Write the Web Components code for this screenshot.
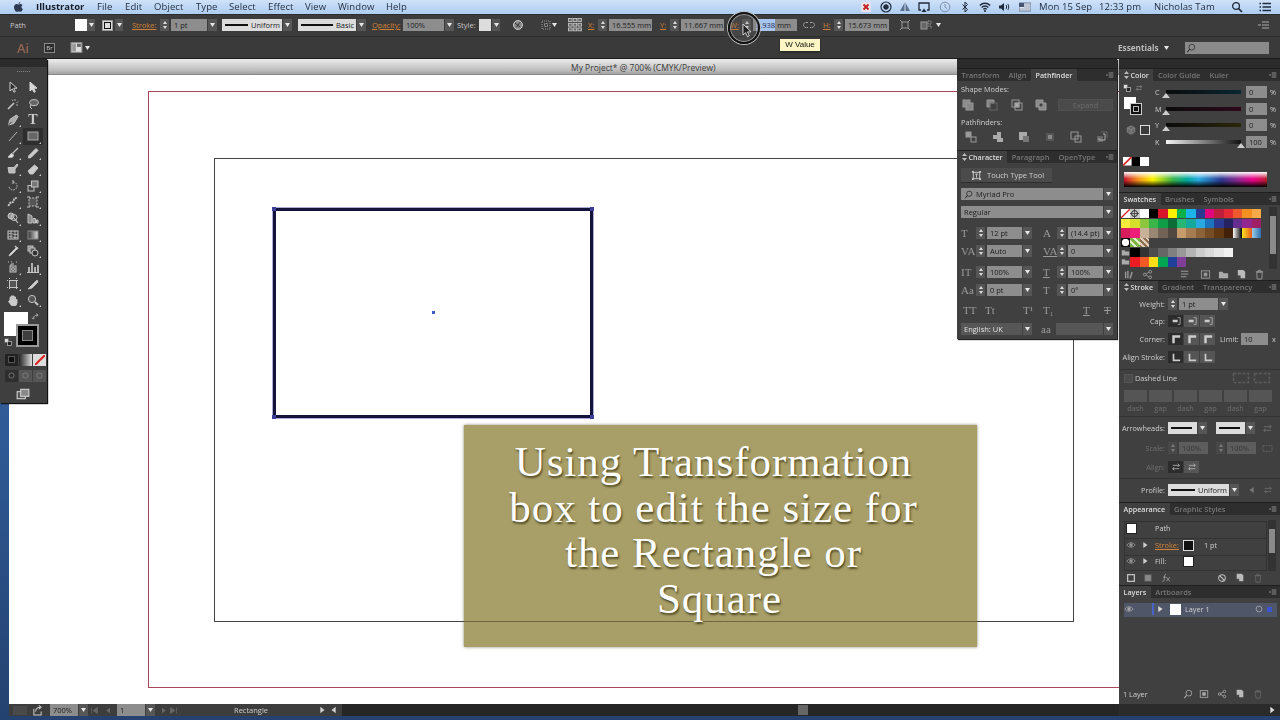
<!DOCTYPE html>
<html lang="en">
<head>
<meta charset="utf-8">
<title>Illustrator</title>
<style>
  html, body { margin: 0; padding: 0; }
  body {
    width: 1280px; height: 720px; overflow: hidden;
    display: flex; flex-direction: column;
    background: linear-gradient(180deg, #3d6aa8 0%, #2f5a96 60%, #24426f 100%);
    font-family: "Open Sans", "Liberation Sans", sans-serif;
  }
  ai-workspace { flex: none; }
</style>
</head>
<body>
<ai-menubar></ai-menubar>
<ai-controlbar></ai-controlbar>
<ai-appbar></ai-appbar>
<ai-workspace>
  <ai-doc slot="doc">
    <ai-caption>Using Transformation<br>box to edit the size for<br>the Rectangle or<br><span style="margin-left:12px">Square</span></ai-caption>
  </ai-doc>
  <ai-dock slot="dock"></ai-dock>
  <ai-tools slot="float"></ai-tools>
  <ai-floatpanel slot="float"></ai-floatpanel>
</ai-workspace>
<ai-statusbar></ai-statusbar>

<script>
//Icons, all on a 12x12 box
const ICONS = {
  sel: '<path d="M3 1v9l2.3-2 1.7 3.3 1.3-.7L6.7 7.2H10z" fill="#2c2c2c" stroke="#ccc"/>',
  dsel: '<path d="M3 1v9l2.3-2 1.7 3.3 1.3-.7L6.7 7.2H10z" fill="#d8d8d8" stroke="#d8d8d8"/>',
  wand: '<path d="M1 11l6-6" stroke-width="1.6"/><path d="M8 1v2M11 3.500L9.500 5M11 7H9M5 1.500l1 1.500" stroke-width=".8"/>',
  lasso: '<ellipse cx="7" cy="4.600" rx="4.300" ry="3" fill="#666"/><path d="M4 7L3 9l2 2"/>',
  pen: '<path d="M9.500 1L11 2.600 6.800 9.500 1.500 11 3 5.400z" fill="#aaa" stroke="#ccc"/><path d="M1.500 11l3-3" stroke="#333"/>',
  line: '<path d="M2 11L10 2" stroke-width=".9"/>',
  rect: '<rect x="1" y="2" width="10" height="8" fill="#666" stroke="#aaa"/>',
  brush: '<path d="M11 1L5.500 6.500" stroke-width="1.200"/><path d="M5 6.500c-2 0-2 2.500-4 3.500 2 1 5.500 1 5.500-2z" fill="#ddd"/>',
  pencil: '<path d="M9 1.500l2 2L4 10.500 1.500 11l.5-2.500z" fill="#ccc" stroke="#ccc"/>',
  blob: '<path d="M1 4.500h6L10 1l1 1-3 4v4H2z" fill="#bbb"/>',
  eraser: '<path d="M7.500 2L11 5l-5 6H3L1 8z" fill="#ccc"/>',
  rotate: '<path d="M6 2a4 4 0 1 1-4 4" stroke-dasharray="1.600 1"/><path d="M6 0v4" />',
  scale: '<rect x="1" y="5.500" width="6" height="5.500" fill="#444"/><rect x="4.500" y="1" width="6.500" height="6" fill="#777"/>',
  warp: '<path d="M1.500 10c2-6 4-2 5-5s2-3 4-3" stroke-width="2" stroke-dasharray="2 .6"/>',
  free: '<rect x="2" y="2" width="8" height="8" stroke-dasharray="2 1.200" fill="#555"/><path d="M0 1h3M9 1h3M0 11h3M9 11h3" />',
  shape: '<circle cx="4" cy="4" r="3" fill="#999"/><circle cx="7" cy="5.500" r="3"/><path d="M7 6l4 5" stroke-width="1.200"/>',
  persp: '<path d="M1 11V2l4 2v7zM6 11V6.500h2.500V11zM9.500 11V8H11v3z" fill="#888"/>',
  mesh: '<rect x="1" y="2" width="10" height="8" fill="#444"/><path d="M1 5c3-2 6 2 10 0M1 8c3-2 6 2 10 0M4 2v8M8 2v8" stroke-width=".8"/>',
  grad: '<defs><linearGradient id="g"><stop offset="0" stop-color="#333"/><stop offset="1" stop-color="#ddd"/></linearGradient></defs><rect x="1" y="2" width="10" height="8" fill="url(#g)" stroke="#888"/>',
  drop: '<path d="M10 2L3 9l-1 2 2-1 7-7z" fill="#ddd"/><path d="M8 1l3 3" stroke-width="1.400"/>',
  blend: '<rect x="1" y="1" width="5" height="5" fill="#888"/><rect x="3" y="3" width="5" height="5" fill="#555"/><circle cx="8" cy="8" r="3" fill="#333"/>',
  spray: '<rect x="3" y="5" width="6" height="6" fill="#555"/><circle cx="6" cy="8" r="1.500"/><path d="M4 5V3h3M1 1h1M4 1h1M9 1h1"/>',
  column: '<path d="M2 11V6M5 11V2M8 11V6M11 11V4" stroke-width="1.700"/><path d="M0 11.500h12"/>',
  board: '<rect x="2.500" y="2.500" width="7" height="7" fill="#555"/><path d="M2.500 0v12M9.500 0v12M0 2.500h12M0 9.500h12" stroke-dasharray="1 1"/>',
  slice: '<path d="M1 11L10 2l1 2-6 6z" fill="#ccc"/>',
  hand: '<path d="M3 7V3.500h1V6V2h1.500v4V2H7v4V3h1.500v4.500V5.500H10V9l-1 2.500H4.500L1.500 7.500 2.500 6.500z" fill="#ccc"/>',
  zoom: '<circle cx="5" cy="5" r="3.600" fill="#555"/><path d="M8 8l3 3" stroke-width="2"/>',
  menu: '<path d="M4 3h7M4 6h7M4 9h7" /><path d="M0 6h3"/>',
  eye: '<path d="M1 6c2.500-3.500 7.500-3.500 10 0-2.500 3.500-7.500 3.500-10 0z"/><circle cx="6" cy="6" r="1.500" fill="currentColor"/>',
  tri: '<path d="M4 2.500l5 3.500-5 3.500z" fill="currentColor" stroke="none"/>',
  triL: '<path d="M8 2.500L3 6l5 3.500z" fill="currentColor" stroke="none"/>',
  globe: '<circle cx="6" cy="6" r="4.500" fill="#888"/><path d="M3 4l5 4M8 3.500L4.500 8" stroke="#333"/>',
  selbox: '<rect x="2" y="2" width="8" height="8" stroke-dasharray="1 1"/><rect x="4.500" y="4.500" width="3" height="3" stroke-dasharray="1 .5"/>',
  refpt: '<g fill="#666" stroke="#ccc" stroke-width=".7"><rect x=".5" y=".5" width="3" height="2.500"/><rect x="4.500" y=".5" width="3" height="2.500"/><rect x="8.500" y=".5" width="3" height="2.500"/><rect x=".5" y="4.500" width="3" height="2.500"/><rect x="4.500" y="4.500" width="3" height="2.500"/><rect x="8.500" y="4.500" width="3" height="2.500"/><rect x=".5" y="8.500" width="3" height="2.500"/><rect x="4.500" y="8.500" width="3" height="2.500"/><rect x="8.500" y="8.500" width="3" height="2.500"/></g>',
  link: '<path d="M5 3.500H3a2.500 2.500 0 0 0 0 5h2M7 3.500h2a2.500 2.500 0 0 1 0 5H7" stroke-dasharray="2 .6"/>',
  isolate: '<rect x="3" y="3" width="6" height="6"/><path d="M1 1l2 2M11 1L9 3M1 11l2-2M11 11L9 9"/>',
  recolor: '<rect x="1" y="3" width="6" height="7" fill="#666"/><path d="M8 2h3v3H8zM8 7h3v3" stroke-dasharray="1 .5"/>',
  arrange: '<rect x="1" y="1.500" width="10" height="9" fill="#ddd" stroke="#888"/><rect x="6.500" y="2.500" width="3.500" height="3" fill="#666" stroke="none"/><rect x="2" y="2.500" width="3.500" height="7" fill="#999" stroke="none"/>',
  union: '<rect x="1" y="1" width="7" height="7" fill="#888"/><rect x="4" y="4" width="7" height="7" fill="#888"/>',
  minus: '<path d="M1 1h7v3H4v4H1z" fill="#888"/><rect x="4" y="4" width="7" height="7" stroke="#666"/>',
  inter: '<rect x="1" y="1" width="7" height="7"/><rect x="4" y="4" width="7" height="7"/><rect x="4" y="4" width="4" height="4" fill="#aaa"/>',
  excl: '<path d="M1 1h7v3H4v4H1zM8 4h3v7H4V8h4z" fill="#888"/>',
  pf1: '<rect x="1" y="1" width="5" height="5" fill="#999"/><rect x="6" y="6" width="5" height="5"/>',
  pf2: '<path d="M1 4h4V1h4v6h2v4H5V8H1z" fill="#aaa" stroke="none"/>',
  pf3: '<rect x="1" y="1" width="8" height="8" fill="#aaa" stroke="none"/><rect x="5" y="5" width="6" height="6" fill="#777" stroke="none"/>',
  pf4: '<rect x="2" y="2" width="8" height="8" fill="#555" stroke="none"/><rect x="4" y="4" width="4" height="4" fill="#888" stroke="none"/>',
  pf5: '<rect x="1" y="1" width="7" height="7"/><rect x="5" y="5" width="6" height="6"/>',
  pf6: '<path d="M5 1h6v6" stroke="#666"/><rect x="1" y="5" width="6" height="6" fill="#666" stroke="none"/><path d="M7 3h2v6H3V7" stroke="#aaa"/>',
  search: '<circle cx="7" cy="5" r="3.500"/><path d="M4.500 7.500L1.500 11" stroke-width="1.300"/>',
  cube: '<path d="M6 1l4.500 2.500v5L6 11 1.500 8.500v-5z" fill="#666"/><path d="M1.500 3.500L6 6l4.500-2.500M6 6v5"/>',
  touch: '<rect x="2.500" y="2.500" width="7" height="7"/><path d="M4.500 4.500h3M6 4.500v4"/><path d="M1 1h2v2H1zM9 1h2v2H9zM1 9h2v2H1zM9 9h2v2H9z" fill="currentColor" stroke="none"/>',
  libs: '<path d="M1 10V3h1.500v7zM3.500 10V2H5v8zM6 10l2-7 1.500.5-2 7z" fill="#999" stroke="none"/>',
  share: '<circle cx="3" cy="6" r="1.500"/><circle cx="9" cy="3" r="1.500"/><circle cx="9" cy="9" r="1.500"/><path d="M4.500 5.500l3-2M4.500 6.500l3 2"/>',
  export: '<path d="M2 4v7h8V7" stroke-width="1.100"/><path d="M4 7c0-3 2-4.500 5-4.500M7.500 0.500L10 2.500 7.500 4.500" stroke-width="1.100"/>',
  listm: '<path d="M1 2.500h8M1 5.500h8M1 8.500h6" stroke-width="1.200"/>',
  place: '<rect x="1.500" y="2" width="9" height="8"/><rect x="4.500" y="4.500" width="3" height="3" fill="currentColor"/>',
  folder: '<path d="M1 3h4l1 1.500h5V10H1z" fill="#aaa" stroke="none"/>',
  newp: '<path d="M2 1h6l2 2v7H2z" fill="#bbb" stroke="none"/><rect x="1" y="7" width="4" height="4" fill="#444" stroke="none"/>',
  trash: '<path d="M2 3h8M4.500 3V1.500h3V3M3 3.500l.5 7.500h5L9 3.500z" />',
  ring: '<circle cx="6" cy="6" r="3.500"/>',
  nope: '<circle cx="6" cy="6" r="4" stroke-width="1.300"/><path d="M3 3l6 6" stroke-width="1.300"/>',
  square: '<rect x="2" y="2" width="8" height="8" stroke-width="1.400"/>',
  filled: '<rect x="2" y="2" width="8" height="8" fill="#888" stroke="#555"/>',
  fx: '<path d="M6 1.500C4 1.500 4.500 4 4 7c-.3 2.500-1 3.500-2.500 3.500M2.500 5H6M6.500 5l4 5M10.500 5l-4 5" stroke-width=".9"/>',
  apple: '<path d="M8.300 1c.1.900-.7 2-1.800 2-.1-1 .8-1.900 1.800-2zM6.600 3.400c.6 0 1.200-.5 2-.5.700 0 1.500.4 2 1.100-1.700 1-1.400 3.300.3 4-.4 1-1.300 2.800-2.400 2.800-.7 0-1-.4-1.800-.4s-1.100.4-1.800.4C3.600 10.800 2 8.200 2 6.200 2 4.300 3.300 3 4.600 3c.8 0 1.400.4 2 .4z" fill="currentColor" stroke="none"/>',
  xbox: '<rect x="1" y="1" width="10" height="10" rx="1.500" fill="#e9e4ea" stroke="none"/><path d="M3.500 3.500l5 5M8.500 3.500l-5 5" stroke="#c32020" stroke-width="1.800"/>',
  rec: '<circle cx="6" cy="6" r="5" stroke-width="1.200"/><circle cx="6" cy="6" r="2.300" fill="currentColor"/>',
  drive: '<path d="M6 1l5 9H1z" fill="#59708e" stroke="none"/><path d="M6 1v9" stroke="#cfe0f4"/>',
  airplay: '<path d="M3 9H1V2h10v7H9" stroke-width="1.300"/><path d="M3.500 11L6 7.500 8.500 11z" fill="currentColor" stroke="none"/>',
  clock: '<circle cx="6" cy="6" r="4.800" stroke-width=".8"/><path d="M6 3v3l2 1.500" stroke-width=".8"/>',
  bt: '<path d="M3.500 3.500l5 5L6 11V1l2.500 2.500-5 5" stroke-width="1"/>',
  wifi: '<path d="M.8 4.500c3-3 7.400-3 10.400 0M2.600 6.500c2-2 4.800-2 6.800 0M4.300 8.400c1-1 2.400-1 3.400 0" stroke-width="1.300"/><circle cx="6" cy="10" r="1" fill="currentColor" stroke="none"/>',
  vol: '<path d="M1 4.500h2L6 2v8L3 7.500H1z" fill="currentColor" stroke="none"/><path d="M8 4c.8 1 .8 3 0 4M9.800 3c1.200 1.700 1.200 4.300 0 6"/>',
  flag: '<rect x="0" y="2" width="12" height="8" fill="#dfe8f4" stroke="#46566e" stroke-width=".7"/><rect x="0" y="2" width="5" height="4" fill="#46566e" stroke="none"/><path d="M5 4h7M5 6h7M0 8h12" stroke="#7b8799" stroke-width=".7"/>',
  mag: '<circle cx="5" cy="5" r="3.400" stroke-width="1.300"/><path d="M7.500 7.500L11 11" stroke-width="1.700"/>',
  list: '<path d="M3.500 2.500H12M3.500 6H12M3.500 9.500H12" stroke-width="1.400"/><path d="M.5 2.500h1.500M.5 6h1.500M.5 9.500h1.500" stroke-width="1.400"/>',
  first: '<path d="M2 2v8M10 2L4 6l6 4z" fill="currentColor"/>',
  prev: '<path d="M8 2L3 6l5 4z" fill="currentColor" stroke="none"/>',
  next: '<path d="M4 2l5 4-5 4z" fill="currentColor" stroke="none"/>',
  last: '<path d="M10 2v8M2 2l6 4-6 4z" fill="currentColor"/>',
  screen: '<rect x="1" y="4" width="7" height="6" fill="#555"/><rect x="4" y="2" width="7" height="6" fill="#888"/>',
  swap: '<path d="M3 9c0-3 2-5 6-5M7 2l2.500 2L7 6M1.500 7.500L3 9.500l2-2" stroke-width=".9"/>',
  dflt: '<rect x="1" y="1" width="6" height="6" fill="#ddd" stroke="#555"/><rect x="5" y="5" width="6" height="6" fill="#222" stroke="#ccc"/>',
  capb: '<path d="M2 6h6" stroke-width="3"/><path d="M8 2h3v8H8" stroke-width=".8"/>',
  cor: '<path d="M3 11V3h8" stroke-width="3"/>',
  als: '<path d="M3 2v8h8" stroke-width="2"/>',
  dash: '<rect x="1" y="3" width="10" height="6" stroke-dasharray="2 1"/>',
  swaps: '<path d="M2 4h8M8 2l2 2-2 2M10 8H2M4 6L2 8l2 2" stroke-width=".8"/>'
};

const ico = (name, size = 12, color = "") =>
  `<svg width="${size}" height="${size}" viewBox="0 0 12 12" fill="none" stroke="currentColor" style="display:block;flex:none;${color ? "color:" + color : ""}">${ICONS[name]}</svg>`;

const CARET = `<svg width="5" height="4" viewBox="0 0 5 4" style="display:block"><path d="M0 0h5L2.500 4z" fill="#e8e8e8"/></svg>`;

//Shared css for the rows that panels are built from
const ROWCSS = `
  .row { display: grid; align-items: start; }
  .cell { height: 12px; display: flex; align-items: center; white-space: nowrap; line-height: 12px; min-width: 0; }
  .r { justify-content: flex-end; padding-right: 3px; }
  .dim { color: #6e6e6e; }
  .org { color: #d5853a; text-decoration: underline; }
`;

//Build rows from reference coordinates: each row is [centreY, [[x, html, cls], ...]]
const place = (ox, oy, rows) => {
  let out = "";
  rows.forEach((row, i) => {
    const y = row[0];
    const nextY = i + 1 < rows.length ? rows[i + 1][0] : y + 12;
    const cols = row[1].map((c, j) => {
      const nx = j + 1 < row[1].length ? row[1][j + 1][0] : null;
      return nx === null ? "auto" : (nx - c[0]) + "px";
    }).join(" ");
    const top = i === 0 ? y - 6 - oy : 0;
    const cells = row[1].map(c => `<div class="cell ${c[2] || ""}">${c[1]}</div>`).join("");
    out += `<div class="row" style="grid-template-columns:${cols};height:${nextY - y}px;margin-top:${top}px;margin-left:${row[1][0][0] - ox}px">${cells}</div>`;
  });
  return out;
};

const gridCols = items => items.map((it, i) => i + 1 < items.length ? (items[i + 1][0] - it[0]) + "px" : "auto").join(" ");

const f = (attrs) => `<ai-field ${attrs}></ai-field>`;

//Number / text field with spinner and dropdown
class AiField extends HTMLElement {
  connectedCallback() {
    const a = n => this.getAttribute(n);
    const has = n => this.hasAttribute(n);
    const w = a("w") || 35;
    const h = a("h") || 12;
    const root = this.attachShadow({ mode: "open" });
    const line = has("line") ? `<i class="ln"></i>` : "";
    root.innerHTML = `
    <style>
      :host { display: inline-flex; height: ${h}px; gap: 1px; font-size: 7.5px; color: #1d1d1d; ${has("dim") ? "opacity:.38;" : ""} }
      .sp { width: 10px; background: #555; display: flex; flex-direction: column; align-items: center; justify-content: space-evenly; border-right: 1px solid #3a3a3a; box-sizing: border-box; }
      .sp b { width: 0; height: 0; border: 2.5px solid transparent; border-top: 0; border-bottom: 3px solid #ddd; }
      .sp b + b { border-bottom: 0; border-top: 3px solid #ddd; }
      .v { width: ${w}px; background: ${has("line") ? "#dcdcdc" : has("dark") ? "#565656" : "#8d8d8d"}; ${has("dark") ? "color:#e2e2e2;" : ""} box-sizing: border-box; padding: 0 2px 0 3px; display: flex; align-items: center; gap: 3px; white-space: nowrap; overflow: hidden; line-height: ${h}px; ${has("line") ? "color:#222;" : ""} }
      .ln { flex: 1; height: 2px; background: #111; }
      .d { width: 9px; background: #565656; display: flex; align-items: center; justify-content: center; }
      mark { background: #a9c6ee; color: #1a2a50; margin-right: -1px; }
    </style>
    ${has("spin") ? `<div class="sp"><b></b><b></b></div>` : ""}
    <div class="v">${has("search") ? ico("search", 9, "#222") : ""}${line}${has("sel") ? `<mark>${a("sel")}</mark>` : ""}<span>${a("value") || ""}</span></div>
    ${has("drop") ? `<div class="d">${CARET}</div>` : ""}`;
  }
}
customElements.define("ai-field", AiField);

//Top system menu bar
class AiMenubar extends HTMLElement {
  connectedCallback() {
    const items = [[12, ico("apple", 12, "#2c3a52")], [36, "<b>Illustrator</b>"], [97, "File"], [125, "Edit"], [154, "Object"], [196, "Type"], [229, "Select"], [268, "Effect"], [305, "View"], [338, "Window"], [386, "Help"],
      [860, ico("xbox")], [880, ico("rec")], [899, ico("drive")], [918, ico("airplay")], [939, ico("clock", 12, "#6d7f97")], [959, ico("bt")], [979, ico("wifi")], [998, ico("vol")], [1019, ico("flag")],
      [1039, "Mon 15 Sep"], [1099, "12:33 pm"], [1154, "Nicholas Tam"], [1231, ico("mag")], [1259, ico("list")]];
    this.attachShadow({ mode: "open" }).innerHTML = `
    <style>
      :host { display: block; height: 14px; background: linear-gradient(180deg, #cfe2f9 0%, #aecdf0 100%); color: #1f2a3c; font-size: 9.5px; filter: blur(.3px); }
      .bar { height: 14px; display: grid; grid-template-columns: ${gridCols(items)}; margin-left: 12px; align-items: center; line-height: 14px; letter-spacing: .1px; }
      .bar > div { white-space: nowrap; display: flex; align-items: center; }
      b { font-weight: 700; color: #151c28; letter-spacing: 0; }
    </style>
    <div class="bar">${items.map(it => `<div>${it[1]}</div>`).join("")}</div>`;
  }
}
customElements.define("ai-menubar", AiMenubar);

//Control bar with the path options
class AiControlbar extends HTMLElement {
  connectedCallback() {
    const dd = `<span class="dd">${CARET}</span>`;
    const items = [[10, `<span class="p">Path</span>`], [75, `<span class="sw"></span>`], [87, dd], [102, `<span class="st"><i></i></span>`], [115, dd],
      [132, `<span class="o">Stroke:</span>`], [160, f('spin drop value="1 pt" w="36"')],
      [222, f('line drop value="Uniform" w="60"')], [298, f('line drop value="Basic" w="58"')],
      [372, `<span class="o">Opacity:</span>`], [403, f('drop value="100%" w="41"')],
      [457, `<span class="p">Style:</span>`], [479, `<span class="sw g"></span>`], [492, dd],
      [512, ico("globe")], [540, ico("selbox", 12, "#999")], [552, CARET], [568, ico("refpt", 14)],
      [588, `<span class="o">X:</span>`], [598, f('spin value="16.555 mm" w="43"')],
      [660, `<span class="o">Y:</span>`], [670, f('spin value="11.667 mm" w="43"')],
      [730, `<span class="o">W:</span>`], [742, f('spin sel="3.938" value="mm" w="44"')],
      [803, ico("link", 12, "#aaa")], [823, `<span class="o">H:</span>`], [834, f('spin value="15.673 mm" w="44"')],
      [899, ico("isolate", 12, "#999")], [920, ico("recolor", 12, "#999")], [936, CARET], [1258, ico("menu", 12, "#aaa")]];
    this.attachShadow({ mode: "open" }).innerHTML = `
    <style>
      :host { display: block; position: relative; height: 23px; background: #3c3c3c; border-top: 1px solid #2a2a2a; box-sizing: border-box; border-bottom: 1px solid #2c2c2c; font-size: 7.5px; color: #ccc; z-index: 5; filter: blur(.3px); }
      .bar { height: 20px; display: grid; grid-template-columns: ${gridCols(items)}; align-items: center; margin-left: 10px; }
      .bar > div { white-space: nowrap; display: flex; align-items: center; }
      .p { color: #c8c8c8; }
      .o { color: #cf8136; text-decoration: underline; }
      .sw { width: 12px; height: 12px; background: #fff; display: block; }
      .sw.g { background: #ddd; }
      .st { width: 11px; height: 11px; background: #ddd; border: 1px solid #999; display: flex; align-items: center; justify-content: center; box-sizing: border-box; }
      .st i { width: 5px; height: 5px; border: 1px solid #111; background: #ddd; display: block; }
      .dd { width: 8px; height: 12px; background: #555; display: flex; align-items: center; justify-content: center; }
      .ring { position: absolute; left: 728px; top: -3px; width: 28px; height: 28px; border-radius: 50%; border: 2px solid #111; box-shadow: 0 0 0 1px #bbb, inset 0 0 0 1px #999; background: rgba(110,110,110,.22); }
      .cur { position: absolute; left: 742px; top: 8px; }
      .tip { position: absolute; left: 780px; top: 24px; width: 40px; height: 12px; background: #fbf6c4; color: #111; font: 8px/12px "Liberation Sans", sans-serif; text-align: center; box-shadow: 0 1px 2px rgba(0,0,0,.5); }
    </style>
    <div class="bar">${items.map(it => `<div>${it[1]}</div>`).join("")}</div>
    <div class="ring"></div>
    <svg class="cur" width="11" height="15" viewBox="0 0 11 15"><path d="M1 1v11l2.600-2.400 1.800 4.200 1.900-.8-1.800-4.100H9z" fill="#222" stroke="#eee" stroke-width=".8"/></svg>
    <div class="tip">W Value</div>`;
  }
}
customElements.define("ai-controlbar", AiControlbar);

//Application bar
class AiAppbar extends HTMLElement {
  connectedCallback() {
    this.attachShadow({ mode: "open" }).innerHTML = `
    <style>
      :host { display: flex; align-items: center; height: 22px; background: #3a3a3a; color: #ccc; font-size: 8px; border-bottom: 1px solid #1b1b1b; box-sizing: border-box; filter: blur(.3px); }
      .ai { margin-left: 17px; width: 27px; font-size: 13px; font-weight: 600; color: #93634f; }
      .br { width: 11px; height: 10px; border: 1px solid #888; box-sizing: border-box; font-size: 6px; line-height: 8px; text-align: center; color: #ccc; background: #2b2b2b; margin-right: 15px; }
      .arr { margin-right: 2px; }
      .sp { flex: 1; }
      .ess { font-weight: 700; color: #bdbdbd; font-size: 8.2px; width: 46px; }
      .cr { width: 21px; }
      .search { width: 84px; height: 12px; background: #8a8a8a; margin-right: 11px; display: flex; align-items: center; padding-left: 1px; box-sizing: border-box; color: #333; }
    </style>
    <div class="ai">Ai</div><div class="br">Br</div>
    <div class="arr">${ico("arrange", 13)}</div>${CARET}
    <div class="sp"></div>
    <div class="ess">Essentials</div><div class="cr">${CARET}</div>
    <div class="search">${ico("search", 10)}</div>`;
  }
}
customElements.define("ai-appbar", AiAppbar);

//Holds document, dock and the floating windows
class AiWorkspace extends HTMLElement {
  constructor() {
    super();
    this.attachShadow({ mode: "open" }).innerHTML = `
    <style>
      :host { display: flex; position: relative; height: 645px; padding-left: 9px; box-sizing: border-box; }
    </style>
    <slot name="doc"></slot><slot name="dock"></slot><slot name="float"></slot>`;
  }
}
customElements.define("ai-workspace", AiWorkspace);

//Document window with the artwork
class AiDoc extends HTMLElement {
  connectedCallback() {
    this.attachShadow({ mode: "open" }).innerHTML = `
    <style>
      :host { display: flex; flex-direction: column; width: 1110px; height: 645px; }
      .title { height: 16px; flex: none; background: linear-gradient(#ececec, #bdbdbd 75%, #a2a2a2); color: #3a3a3a; font-size: 8.5px; line-height: 17px; padding-left: 562px; box-sizing: border-box; border-bottom: 1px solid #8b8b8b; }
      .canvas { flex: 1; position: relative; background: #fff; overflow: hidden; }
      .bleed { position: absolute; left: 139px; top: 16px; width: 1100px; height: 597px; border: 1px solid #a8485a; box-sizing: border-box; }
      .board { position: absolute; left: 205px; top: 83px; width: 860px; height: 464px; border: 1px solid #444; box-sizing: border-box; }
      .rect { position: absolute; left: 264px; top: 133px; width: 320px; height: 210px; box-sizing: border-box; border: 3px solid #14143a; box-shadow: 0 0 0 1px rgba(90,90,170,.5); }
      .h { position: absolute; width: 4px; height: 4px; background: #3e3e98; }
      .dot { position: absolute; left: 423px; top: 236px; width: 3px; height: 3px; background: #3f5cc8; }
    </style>
    <div class="title">My Project* @ 700% (CMYK/Preview)</div>
    <div class="canvas">
      <div class="bleed"></div>
      <div class="board"></div>
      <div class="rect"></div>
      <div class="h" style="left:263px;top:132px"></div><div class="h" style="left:581px;top:132px"></div>
      <div class="h" style="left:263px;top:340px"></div><div class="h" style="left:581px;top:340px"></div>
      <div class="dot"></div>
      <slot></slot>
    </div>`;
  }
}
customElements.define("ai-doc", AiDoc);

//Olive caption of the tutorial, the artboard edge shows through it behind the text
class AiCaption extends HTMLElement {
  connectedCallback() {
    this.attachShadow({ mode: "open" }).innerHTML = `
    <style>
      :host { position: absolute; z-index: 0; left: 455px; top: 350px; width: 513px; height: 222px; box-sizing: border-box; padding: 14px 14px 0 0; background: #a89e67; box-shadow: 0 0 3px rgba(90,85,50,.7); color: #fff; font-family: "Liberation Serif", "Times New Roman", serif; font-size: 43px; line-height: 45.5px; letter-spacing: .95px; text-align: center; text-shadow: 1px 2px 2px rgba(50,45,15,.75); }
      :host::before { content: ""; position: absolute; z-index: -1; left: 0; right: 0; top: 196px; height: 1px; background: #6f683f; }
    </style>
    <slot></slot>`;
  }
}
customElements.define("ai-caption", AiCaption);

//Floating tool panel
class AiTools extends HTMLElement {
  connectedCallback() {
    const names = ["sel", "dsel", "wand", "lasso", "pen", "T", "line", "rect", "brush", "pencil", "blob", "eraser", "rotate", "scale", "warp", "free", "shape", "persp", "mesh", "grad", "drop", "blend", "spray", "column", "board", "slice", "hand", "zoom"];
    const plain = ["sel", "dsel", "wand", "lasso", "drop", "slice", "T"];
    const tools = names.map(n => {
      const tick = plain.indexOf(n) < 0 ? `<i></i>` : "";
      const inner = n === "T" ? `<span class="t">T</span>` : ico(n, 12, "#c4c4c4");
      return `<div class="tool ${n === "rect" ? "on" : ""}">${inner}${tick}</div>`;
    }).join("");
    this.attachShadow({ mode: "open" }).innerHTML = `
    <style>
      :host { position: absolute; left: 0; top: 0; width: 47px; height: 344px; background: #3f3f3f; display: flex; flex-direction: column; box-shadow: 1px 1px 1px #111; z-index: 3; filter: blur(.3px); }
      .hd { height: 8px; background: #2b2b2b; flex: none; }
      .gr { height: 12px; flex: none; }
      .gr::after { content: ""; display: block; width: 13px; margin: 4px auto 0; border-top: 1px dotted #888; }
      .grid { display: grid; grid-template-columns: 20px 20px; grid-auto-rows: 16.4px; padding-left: 3px; flex: none; }
      .tool { position: relative; display: flex; align-items: center; justify-content: center; }
      .tool.on { background: #2d2d2d; }
      .tool i { position: absolute; right: 2px; bottom: 1px; width: 0; height: 0; border-left: 2px solid transparent; border-bottom: 2px solid #ccc; }
      .t { font: 700 14px/14px "Liberation Serif", serif; color: #ccc; }
      .color { position: relative; height: 41px; flex: none; margin-top: 3.5px; }
      .fill { position: absolute; left: 4px; top: 0; width: 24px; height: 24px; background: #fff; }
      .stroke { position: absolute; left: 16px; top: 12px; width: 23px; height: 23px; background: #000; border: 2px solid #999; box-sizing: border-box; display: flex; align-items: center; justify-content: center; }
      .stroke::after { content: ""; width: 9px; height: 9px; border: 1px solid #888; background: #3f3f3f; }
      .sw { position: absolute; left: 31px; top: 0; }
      .df { position: absolute; left: 4px; top: 26px; }
      .modes { display: flex; gap: 1px; margin: 1px 0 0 5px; height: 12px; flex: none; }
      .modes div { width: 13px; background: #555; display: flex; align-items: center; justify-content: center; }
      .scr { margin: 5px 0 0 16px; }
    </style>
    <div class="hd"></div><div class="gr"></div>
    <div class="grid">${tools}</div>
    <div class="color">
      <div class="fill"></div><div class="stroke"></div>
      <div class="sw">${ico("swap", 9, "#ccc")}</div><div class="df">${ico("dflt", 8)}</div>
    </div>
    <div class="modes">
      <div style="background:#222"><span style="width:5px;height:5px;background:#111;border:1px solid #555;display:block"></span></div>
      <div style="background:linear-gradient(90deg,#222,#ddd)"></div>
      <div style="background:#ddd"><svg width="10" height="10" viewBox="0 0 10 10"><path d="M0 10L10 0" stroke="#d22" stroke-width="2"/></svg></div>
    </div>
    <div class="modes" style="margin-top:4px">
      <div style="background:#2e2e2e;color:#888">${ico("ring", 9)}</div><div style="color:#888">${ico("ring", 9)}</div><div style="color:#888">${ico("ring", 9)}</div>
    </div>
    <div class="scr">${ico("screen", 14, "#ccc")}</div>`;
  }
}
customElements.define("ai-tools", AiTools);

//Tabbed panel frame
class AiPanel extends HTMLElement {
  connectedCallback() {
    const tabs = (this.getAttribute("tabs") || "").split("|");
    const act = Number(this.getAttribute("act") || 0);
    const arrows = this.hasAttribute("arrows") ? `<svg width="5" height="8" viewBox="0 0 5 8" style="margin-right:2px"><path d="M0 3l2.500-3L5 3zM0 5l2.500 3L5 5z" fill="#bbb"/></svg>` : "";
    const h = this.getAttribute("h") || 100;
    const tabsHtml = tabs.map((t, i) => `<div class="tab ${i === act ? "on" : ""}">${i === 0 ? arrows : ""}${t}</div>`).join("");
    this.attachShadow({ mode: "open" }).innerHTML = `
    <style>
      :host { display: block; background: #404040; border-top: 1px solid #1f1f1f; box-sizing: border-box; color: #cfcfcf; font-size: 7.3px; }
      .tabs { height: 12px; background: #2e2e2e; display: flex; align-items: stretch; position: relative; font-size: 7.5px; }
      .tab { padding: 0 4.5px; display: flex; align-items: center; font-weight: 600; color: #777; white-space: nowrap; line-height: 12px; }
      .tab.on { background: #404040; color: #ddd; font-size: 7.2px; }
      .m { position: absolute; right: 3px; top: 2px; color: #bbb; }
      .body { height: ${h}px; position: relative; overflow: hidden; }
    </style>
    <div class="tabs">${tabsHtml}<div class="m">${ico("menu", 8)}</div></div>
    <div class="body"><slot></slot></div>`;
  }
}
customElements.define("ai-panel", AiPanel);

//Floating group: Pathfinder and Character
class AiFloatpanel extends HTMLElement {
  connectedCallback() {
    this.attachShadow({ mode: "open" }).innerHTML = `
    <style>
      :host { position: absolute; left: 957px; top: 0; width: 160px; background: #404040; box-shadow: 1px 1px 1px #222; z-index: 3; filter: blur(.3px); }
      .hd { height: 9px; background: #2b2b2b; }
    </style>
    <div class="hd"></div>
    <ai-pathfinder></ai-pathfinder>
    <ai-character></ai-character>`;
  }
}
customElements.define("ai-floatpanel", AiFloatpanel);

class AiPathfinder extends HTMLElement {
  connectedCallback() {
    const i = n => ico(n, 12, "#999");
    this.attachShadow({ mode: "open" }).innerHTML = `
    <style>:host { display: block; } ${ROWCSS}
      .btn { width: 55px; height: 12px; background: #4a4a4a; border: 1px solid #4f4f4f; box-sizing: border-box; color: #6c6c6c; text-align: center; line-height: 10px; }
    </style>
    <ai-panel tabs="Transform|Align|Pathfinder" act="2" h="69">
      ${place(957, 81, [
        [89, [[961, "Shape Modes:"]]],
        [105, [[962, i("union")], [986, i("minus")], [1011, i("inter")], [1035, i("excl")], [1058, `<div class="btn">Expand</div>`]]],
        [122, [[961, "Pathfinders:"]]],
        [137, [[965, i("pf1")], [992, i("pf2")], [1018, i("pf3")], [1044, i("pf4")], [1070, i("pf5")], [1096, i("pf6")]]]
      ])}
    </ai-panel>`;
  }
}
customElements.define("ai-pathfinder", AiPathfinder);

class AiCharacter extends HTMLElement {
  connectedCallback() {
    const g = (t, st = "") => `<span class="g" style="${st}">${t}</span>`;
    const ul = "text-decoration:underline";
    const pair = (y, ic1, v1, ic2, v2) => [y, [[961, ic1], [976, f(`spin drop value="${v1}" w="35"`)], [1043, ic2], [1057, f(`spin drop value="${v2}" w="35"`)]]];
    this.attachShadow({ mode: "open" }).innerHTML = `
    <style>:host { display: block; } ${ROWCSS}
      .tt { width: 91px; height: 15px; background: #4b4b4b; border-bottom: 1px solid #2e2e2e; display: flex; align-items: center; gap: 5px; padding-left: 10px; box-sizing: border-box; color: #cfcfcf; font-size: 7.5px; }
      .g { font: 11px/12px "Liberation Serif", serif; color: #9a9a9a; }
    </style>
    <ai-panel tabs="Character|Paragraph|OpenType" arrows h="176">
      ${place(957, 163, [
        [175.5, [[961, `<div class="tt">${ico("touch", 11, "#ccc")}Touch Type Tool</div>`]]],
        [194, [[961, f('drop search w="142" value="Myriad Pro"')]]],
        [212, [[961, f('drop w="142" value="Regular"')]]],
        pair(233, g("T"), "12 pt", g("A"), "(14.4 pt)"),
        pair(251, g("VA"), "Auto", g("VA", ul), "0"),
        pair(272, g("IT"), "100%", g("T", ul), "100%"),
        pair(290, g("Aa"), "0 pt", g("T"), "0°"),
        [310, [[963, g("TT")], [985, g("Tt")], [1023, g("T¹")], [1043, g("T₁")], [1083, g("T", ul)], [1104, g("T", "text-decoration:line-through")]]],
        [329, [[961, f('drop w="61" dark value="English: UK"')], [1041, g("aa")], [1056, f('drop w="47" dark')]]]
      ])}
    </ai-panel>`;
  }
}
customElements.define("ai-character", AiCharacter);

//Right dock
class AiDock extends HTMLElement {
  connectedCallback() {
    this.attachShadow({ mode: "open" }).innerHTML = `
    <style>
      :host { display: flex; flex-direction: column; width: 161px; height: 645px; flex: none; background: #3c3c3c; filter: blur(.3px); }
      .hd { height: 9px; background: #2b2b2b; flex: none; }
    </style>
    <div class="hd"></div>
    <ai-colorpanel></ai-colorpanel>
    <ai-swatches></ai-swatches>
    <ai-strokepanel></ai-strokepanel>
    <ai-appearance></ai-appearance>
    <ai-layers></ai-layers>`;
  }
}
customElements.define("ai-dock", AiDock);

class AiColorpanel extends HTMLElement {
  connectedCallback() {
    const sl = (bg, end) => `<div class="sl" style="background:${bg}"><svg class="mk" style="left:${end ? 71 : -4}px" width="8" height="5" viewBox="0 0 8 5"><path d="M4 0l4 5H0z" fill="#ccc"/></svg></div>`;
    const row = (y, l, bg, v, end) => [y, [[1155, l], [1166, sl(bg, end)], [1246, f(`w="21" value="${v}"`)], [1270, "%"]]];
    this.attachShadow({ mode: "open" }).innerHTML = `
    <style>:host { display: block; flex: none; } ${ROWCSS}
      .sl { width: 75px; height: 4px; position: relative; }
      .mk { position: absolute; top: 3px; display: block; }
      .fs { position: absolute; left: 5px; top: 16px; width: 12px; height: 12px; background: #fff; }
      .fs2 { position: absolute; left: 11px; top: 22px; width: 12px; height: 12px; background: #111; border: 1px solid #ccc; box-sizing: border-box; display: flex; align-items: center; justify-content: center; }
      .fs2::after { content: ""; width: 4px; height: 4px; border: 1px solid #bbb; }
      .ic { position: absolute; }
      .sq { position: absolute; left: 21px; top: 44px; width: 8px; height: 8px; border: 1px solid #ddd; background: #3a3a3a; }
      .tri { position: absolute; left: 4px; top: 76px; display: flex; }
      .tri div { width: 8.5px; height: 8.5px; }
      .spec { position: absolute; left: 5px; top: 91px; width: 143px; height: 15px;
        background: linear-gradient(#fff, rgba(255,255,255,0) 45%, rgba(0,0,0,0) 55%, #000),
        linear-gradient(90deg, #c6102c 0%, #f7941d 10%, #fff200 20%, #39b54a 34%, #00a99d 44%, #27aae1 52%, #2b3990 68%, #92278f 80%, #ec008c 90%, #be1e2d 100%); }
    </style>
    <ai-panel tabs="Color|Color Guide|Kuler" arrows h="111">
      ${place(1119, 81, [
        row(92, "C", "linear-gradient(90deg,#0b0b0b,#0a2630)", "0"),
        row(109, "M", "linear-gradient(90deg,#0b0b0b,#2c0a1a)", "0"),
        row(125, "Y", "linear-gradient(90deg,#0b0b0b,#2a260a)", "0"),
        row(142, "K", "linear-gradient(90deg,#f4f4f4,#111)", "100", true)
      ])}
      <div class="ic" style="left:4px;top:3px">${ico("dflt", 8)}</div>
      <div class="ic" style="left:16px;top:3px">${ico("swaps", 8, "#aaa")}</div>
      <div class="fs"></div><div class="fs2"></div>
      <div class="ic" style="left:7px;top:44px">${ico("cube", 10, "#888")}</div><div class="sq"></div>
      <div class="tri"><div><svg width="8.5" height="8.5" viewBox="0 0 8 8" style="display:block"><rect width="8" height="8" fill="#fff"/><path d="M0 8L8 0" stroke="#d22" stroke-width="1.5"/></svg></div><div style="background:#000"></div><div style="background:#fff"></div></div>
      <div class="spec"></div>
    </ai-panel>`;
  }
}
customElements.define("ai-colorpanel", AiColorpanel);

class AiSwatches extends HTMLElement {
  connectedCallback() {
    const rows = [
      ["none", "reg", "#fff", "#000", "#d7162a", "#fff200", "#0db14b", "#1cb4e8", "#2a3a90", "#e0067e", "#be1e3c", "#e32a35", "#ee5a2c", "#f29122", "#f7a947"],
      ["#f6ec3c", "#d5de2b", "#8cc63f", "#39b54a", "#0f9d47", "#0e6d36", "#27b673", "#15a89d", "#28a9e0", "#1c75bc", "#2b3990", "#262262", "#652d90", "#91278f", "#9e1f63"],
      ["#d91c5c", "#ec1e79", "#c7b299", "#998675", "#736357", "#534741", "#c69c6d", "#a67c52", "#8c6239", "#754c24", "#603913", "#42210b", "linear-gradient(90deg,#fff,#000)", "linear-gradient(90deg,#f7e11f,#e8581f)", "linear-gradient(90deg,#9ccbe8,#2d6fb0)"],
      ["radial-gradient(circle,#fff 55%,#111 60%)", "repeating-linear-gradient(45deg,#7cb342 0 3px,#dcedc8 3px 5px)", "repeating-linear-gradient(45deg,#8d6e53 0 2px,#e0cdb8 2px 4px)"],
      ["folder", "#000", "#333", "#4d4d4d", "#666", "#808080", "#999", "#b3b3b3", "#ccc", "#d9d9d9", "#e6e6e6", "#f2f2f2"],
      ["folder", "#ed1c24", "#f15a24", "#ffde17", "#00a651", "#21409a", "#7f3f98"]
    ];
    const cell = c => {
      if (c === "none") return `<div style="background:#fff"><svg width="9" height="9" viewBox="0 0 9 9" style="display:block"><path d="M0 9L9 0" stroke="#d22" stroke-width="1.3"/></svg></div>`;
      if (c === "reg") return `<div style="background:#ccc"><svg width="9" height="9" viewBox="0 0 9 9" style="display:block"><circle cx="4.5" cy="4.5" r="3" fill="none" stroke="#222"/><path d="M4.5 0v9M0 4.5h9" stroke="#222" stroke-width=".7"/></svg></div>`;
      if (c === "folder") return `<div>${ico("folder", 9)}</div>`;
      return `<div style="background:${c}"></div>`;
    };
    const footer = [[1124, "libs"], [1142, "share"], [1180, "listm"], [1200, "place"], [1218, "folder"], [1236, "newp"], [1254, "trash"]];
    this.attachShadow({ mode: "open" }).innerHTML = `
    <style>:host { display: block; flex: none; } ${ROWCSS}
      .wrap { display: flex; padding: 4px 0 0 5px; height: 62px; box-sizing: border-box; gap: 5px; }
      .g { width: 140px; display: flex; flex-direction: column; gap: .4px; }
      .r { display: grid; grid-template-columns: repeat(15, 9.33px); grid-auto-rows: 9.3px; }
      .sb { width: 8px; height: 62px; margin-top: -2px; background: #333; position: relative; }
      .sb b { width: 6px; height: 38px; background: #8a8a8a; position: absolute; top: 9px; left: 1px; }
    </style>
    <ai-panel tabs="Swatches|Brushes|Symbols" h="75">
      <div class="wrap">
        <div class="g">${rows.map(r => `<div class="r">${r.map(cell).join("")}</div>`).join("")}</div>
        <div class="sb"><b></b></div>
      </div>
      ${place(1119, 267, [[274, footer.map(it => [it[0], ico(it[1], 11, "#999")])]])}
    </ai-panel>`;
  }
}
customElements.define("ai-swatches", AiSwatches);

class AiStrokepanel extends HTMLElement {
  connectedCallback() {
    const bt = (list) => `<span class="bts">${list.map((n, i) => `<span class="${i ? "" : "on"}">${ico(n, 10, "#ccc")}</span>`).join("")}</span>`;
    const boxes = [0, 1, 2, 3, 4, 5].map(() => `<i></i>`).join("");
    const lab = ["dash", "gap", "dash", "gap", "dash", "gap"].map(t => `<span>${t}</span>`).join("");
    this.attachShadow({ mode: "open" }).innerHTML = `
    <style>:host { display: block; flex: none; } ${ROWCSS}
      .bts { display: inline-flex; gap: 1px; }
      .bts span { width: 15px; height: 12px; background: #555; display: flex; align-items: center; justify-content: center; }
      .bts span.on { background: #2c2c2c; }
      .cb { width: 7px; height: 7px; background: #4b4b4b; border: 1px solid #555; display: block; }
      .bx { display: grid; grid-template-columns: repeat(6, 25px); width: 150px; }
      .bx i { display: block; width: 23px; height: 12px; background: #555; }
      .lb { display: grid; grid-template-columns: repeat(6, 25px); color: #6e6e6e; width: 150px; }
      .lb span { width: 23px; text-align: center; }
      .sep { position: absolute; left: 0; right: 0; height: 1px; background: #333; }
    </style>
    <ai-panel tabs="Stroke|Gradient|Transparency" arrows h="209">
      <div class="sep" style="top:76px"></div><div class="sep" style="top:123px"></div><div class="sep" style="top:185px"></div>
      ${place(1119, 293, [
        [304, [[1119, "Weight:", "r"], [1168, f('spin drop value="1 pt" w="39"')]]],
        [321, [[1119, "Cap:", "r"], [1168, bt(["capb", "capb", "capb"])]]],
        [339, [[1119, "Corner:", "r"], [1168, bt(["cor", "cor", "cor"])], [1220, "Limit:"], [1241, f('value="10" w="27"')], [1272, "x"]]],
        [357, [[1119, "Align Stroke:", "r"], [1168, bt(["als", "als", "als"])]]],
        [378, [[1124, `<span class="cb"></span>`], [1135, "Dashed Line"], [1232, `<span style="display:flex;gap:3px;opacity:.5">${ico("dash", 18, "#777")}${ico("dash", 18, "#777")}</span>`]]],
        [396, [[1124, `<div class="bx">${boxes}</div>`]]],
        [408, [[1124, `<div class="lb">${lab}</div>`]]],
        [428, [[1119, "Arrowheads:", "r"], [1168, f('line drop w="29"')], [1216, f('line drop w="29"')], [1262, ico("swaps", 11, "#777")]]],
        [448, [[1119, "Scale:", "r dim"], [1168, f('spin dim value="100%" w="29"')], [1216, f('spin dim value="100%" w="29"')], [1262, ico("dash", 11, "#666")]]],
        [467, [[1119, "Align:", "r dim"], [1168, bt(["swaps", "swaps"])]]],
        [490, [[1119, "Profile:", "r"], [1168, f('line drop value="Uniform" w="61"')], [1247, ico("triL", 10, "#777")], [1263, ico("swaps", 10, "#777")]]]
      ])}
    </ai-panel>`;
  }
}
customElements.define("ai-strokepanel", AiStrokepanel);

class AiAppearance extends HTMLElement {
  connectedCallback() {
    const i = (n, c = "#999") => ico(n, 10, c);
    this.attachShadow({ mode: "open" }).innerHTML = `
    <style>:host { display: block; flex: none; } ${ROWCSS}
      .list { position: absolute; left: 5px; top: 6px; width: 143px; height: 50px; border: 1px solid #333; box-sizing: border-box; }
      .list i { position: absolute; left: 0; right: 0; height: 1px; background: #333; }
      .sw { width: 11px; height: 11px; background: #fff; border: 1px solid #222; display: block; box-sizing: border-box; }
      .swb { width: 11px; height: 11px; background: #111; border: 1px solid #ddd; display: block; box-sizing: border-box; }
      .sb { position: absolute; left: 149px; top: 5px; width: 8px; height: 51px; background: #333; }
      .sb b { position: absolute; left: 1px; top: 9px; width: 6px; height: 24px; background: #8a8a8a; }
    </style>
    <ai-panel tabs="Appearance|Graphic Styles" h="70">
      <div class="list"><i style="top:16px"></i><i style="top:33px"></i></div>
      <div class="sb"><b></b></div>
      ${place(1119, 515, [
        [528, [[1126, `<span class="sw"></span>`], [1155, "Path"]]],
        [545, [[1126, i("eye")], [1140, i("tri", "#ccc")], [1155, `<span class="org">Stroke:</span>`], [1183, `<span class="swb"></span>`], [1204, "1 pt"]]],
        [561, [[1126, i("eye")], [1140, i("tri", "#ccc")], [1155, "Fill:"], [1183, `<span class="sw"></span>`]]],
        [578, [[1126, i("square", "#ccc")], [1143, i("filled")], [1161, i("fx", "#aaa")], [1217, i("nope", "#bbb")], [1235, i("newp", "#666")], [1253, i("trash", "#666")]]]
      ])}
    </ai-panel>`;
  }
}
customElements.define("ai-appearance", AiAppearance);

class AiLayers extends HTMLElement {
  connectedCallback() {
    const i = (n, c = "#aaa") => ico(n, 10, c);
    this.attachShadow({ mode: "open" }).innerHTML = `
    <style>:host { display: block; flex: none; } ${ROWCSS}
      .sel { position: absolute; left: 5px; right: 3px; top: 5px; height: 14px; background: #4f5668; }
      .bar { width: 2px; height: 12px; background: #4a64c8; display: block; }
      .sw { width: 11px; height: 11px; background: #fff; display: block; }
      .dot { width: 5px; height: 5px; background: #3d55d0; display: block; }
    </style>
    <ai-panel tabs="Layers|Artboards" h="106">
      <div class="sel"></div>
      <div style="position:relative">
      ${place(1119, 598, [
        [609, [[1124, i("eye", "#aaa")], [1152, `<span class="bar"></span>`], [1155, i("tri", "#ddd")], [1170, `<span class="sw"></span>`], [1185, "Layer 1"], [1254, i("ring")], [1267, `<span class="dot"></span>`]]],
        [694, [[1123, "1 Layer"], [1183, i("search")], [1199, i("place")], [1217, i("share")], [1235, i("newp")], [1253, i("trash", "#666")]]]
      ])}
      </div>
    </ai-panel>`;
  }
}
customElements.define("ai-layers", AiLayers);

//Status bar under the document
class AiStatusbar extends HTMLElement {
  connectedCallback() {
    const items = [[13, `<span class="box"></span>`], [32, ico("export", 11, "#ccc")], [50, f('drop value="700%" w="28"')], [90, ico("first", 9, "#666")], [104, ico("prev", 9, "#666")], [117, f('drop value="1" w="28"')], [159, ico("next", 9, "#666")], [169, ico("last", 9, "#666")], [234, "Rectangle"], [317, ico("next", 10, "#ccc")], [329, ico("prev", 10, "#ccc")]];
    this.attachShadow({ mode: "open" }).innerHTML = `
    <style>
      :host { display: flex; height: 12px; margin-left: 9px; background: #3d3d3d; color: #cfcfcf; font-size: 7.5px; position: relative; filter: blur(.3px); }
      .bar { display: grid; grid-template-columns: ${gridCols(items)}; width: 329px; margin-left: 4px; align-items: center; height: 12px; flex: none; }
      .bar > div { display: flex; align-items: center; white-space: nowrap; }
      .box { width: 14px; height: 9px; background: #4a4a4a; display: block; }
      .track { flex: 1; background: #262626; position: relative; }
      .thumb { position: absolute; left: 456px; top: 1px; width: 10px; height: 10px; background: #666; }
      .end { width: 161px; background: #2b2b2b; display: flex; justify-content: flex-end; align-items: center; padding-right: 3px; box-sizing: border-box; flex: none; }
    </style>
    <div class="bar">${items.map(it => `<div>${it[1]}</div>`).join("")}</div>
    <div class="track"><div class="thumb"></div></div>
    <div class="end">${ico("next", 10, "#ddd")}</div>`;
  }
}
customElements.define("ai-statusbar", AiStatusbar);
</script>
</body>
</html>
